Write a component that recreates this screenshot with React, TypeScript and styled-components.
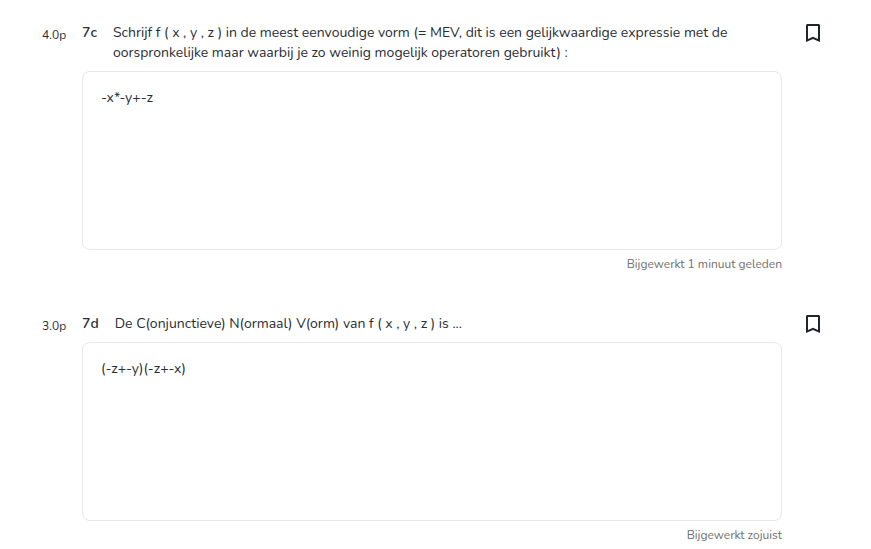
import React from "react";
import styled, { createGlobalStyle } from "styled-components";

const Global = createGlobalStyle`
  * { box-sizing: border-box; }
  body { margin: 0; background: #fff; color: #292d35; font-family: Nunito, "Noto Sans", sans-serif; overflow: hidden; }
`;

const Page = styled.main`
  padding: 23px 50px 0 42px;
  display: flex;
  flex-direction: column;
  gap: 41px;
`;

const Question = styled.section<{ $height: number }>`
  display: grid;
  grid-template-columns: 40px 700px 1fr;
  height: ${(p) => p.$height}px;
`;

const Points = styled.span`
  font-size: 12px;
  line-height: 24px;
  white-space: nowrap;
`;

const Body = styled.div`
  display: flex;
  flex-direction: column;
`;

const Heading = styled.div`
  display: flex;
  gap: 16px;
  font-size: 14px;
  line-height: 20px;
`;

const Label = styled.span`
  font-weight: 600;
`;

const Prompt = styled.div`
  white-space: pre-line;
`;

const Answer = styled.div`
  height: 179px;
  margin-top: 8px;
  border: 1px solid #e8e8e8;
  border-radius: 8px;
  padding: 16px 18px;
  font-size: 14px;
  line-height: 20px;
`;

const Status = styled.div`
  margin-top: 5px;
  text-align: right;
  font-size: 12px;
  line-height: 18px;
  color: #707070;
`;

const Bookmark = styled.svg`
  width: 24px;
  height: 24px;
  margin: -2px 0 0 19px;
  fill: #20242c;
`;

const items = [
  {
    points: "4.0p",
    label: "7c",
    height: 250,
    prompt:
      "Schrijf f ( x , y , z ) in de meest eenvoudige vorm (= MEV, dit is een gelijkwaardige expressie met de\noorspronkelijke maar waarbij je zo weinig mogelijk operatoren gebruikt) :",
    answer: "-x*-y+-z",
    status: "Bijgewerkt 1 minuut geleden",
  },
  {
    points: "3.0p",
    label: "7d",
    height: 230,
    prompt: "De C(onjunctieve) N(ormaal) V(orm) van f ( x , y , z ) is ...",
    answer: "(-z+-y)(-z+-x)",
    status: "Bijgewerkt zojuist",
  },
];

export default function App() {
  return (
    <>
      <Global />
      <Page>
        {items.map((q) => (
          <Question key={q.label} $height={q.height}>
            <Points>{q.points}</Points>
            <Body>
              <Heading>
                <Label>{q.label}</Label>
                <Prompt>{q.prompt}</Prompt>
              </Heading>
              <Answer>{q.answer}</Answer>
              <Status>{q.status}</Status>
            </Body>
            <Bookmark viewBox="0 0 24 24">
              <path d="M17.5 3h-11C5.7 3 5 3.7 5 4.5V21l7-3 7 3V4.5c0-.8-.7-1.5-1.5-1.5zM17 18l-5-2.18L7 18V5h10v13z" />
            </Bookmark>
          </Question>
        ))}
      </Page>
    </>
  );
}
